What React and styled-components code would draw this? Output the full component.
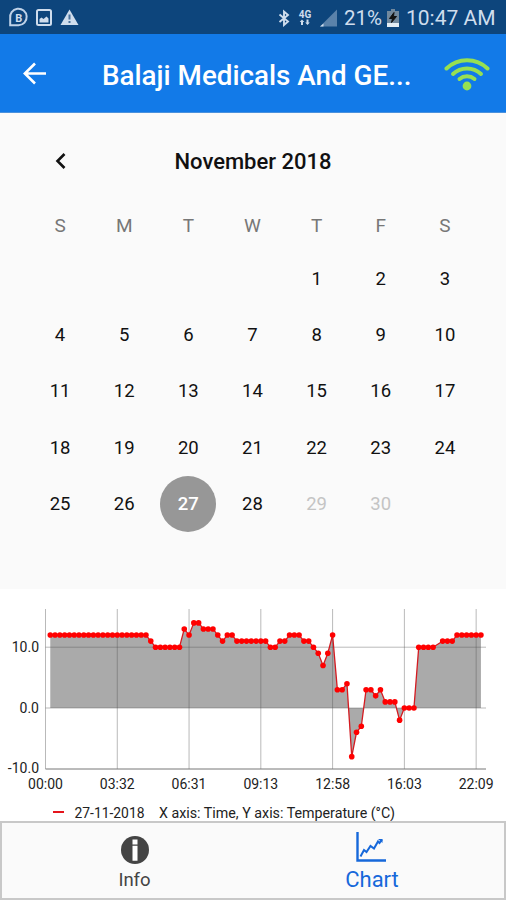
import React from 'react';
import styled, { createGlobalStyle } from 'styled-components';

const WEEKDAYS = ['S', 'M', 'T', 'W', 'T', 'F', 'S'];
const FIRST_WEEKDAY = 4;
const SELECTED_DAY = 27;
const LAST_ENABLED_DAY = 28;

// [temperature, number of samples in a row], null is a missed sample
const READINGS = [
  [12, 21], [11, 1], [10, 6], [13, 1], [12, 1], [14, 2], [13, 3], [12, 1],
  [11, 1], [12, 2], [11, 7], [10, 2], [11, 2], [12, 3], [11, 2], [10, 1],
  [9, 1], [7, 1], [9, 1], [12, 1], [3, 2], [4, 1], [-8, 1], [-4, 1], [-3, 1],
  [3, 2], [2, 1], [3, 1], [1, 3], [-2, 1], [0, 3], [10, 4], [null, 1],
  [11, 3], [12, 6],
]
  .flatMap(([value, count]) => Array(count).fill(value))
  .map((value, i) => ({ index: i + 1, value }))
  .filter(({ value }) => value !== null);

const TIMES = ['00:00', '03:32', '06:31', '09:13', '12:58', '16:03', '22:09'];

const LEFT = 45.5;
const RIGHT = 486;
const TOP = 20;
const ZERO = 119;
const BOTTOM = 180;
const STEP = 4.785;
const UNIT = 6.08;

const xAt = index => LEFT + index * STEP;
const yAt = value => ZERO - value * UNIT;

const StatusIcons = () => (
  <svg width="74" height="20" viewBox="0 0 74 20" fill="none">
    <path
      d="M2.2 18.300V11.500A8.300 8.300 0 1 1 10.500 18.300Z"
      stroke="#bfd2e8"
      strokeWidth="2"
    />
    <text x="10.700" y="15" fontSize="11" fontWeight="700" textAnchor="middle" fill="#cfdded">
      B
    </text>
    <rect x="29" y="3" width="14" height="15" rx="1.500" stroke="#cfdded" strokeWidth="2" />
    <path d="M31.500 15.500V12l2-1.500 2 1.500 3-2.500 2 2v4z" fill="#cfdded" />
    <path d="M61.500 2.500 70.500 18H52.500Z" fill="#cfdded" />
    <path d="M61.500 7.500v5M61.500 14v2" stroke="#48719b" strokeWidth="2" />
  </svg>
);

const BluetoothIcon = () => (
  <svg width="12" height="18" viewBox="0 0 12 18" fill="none" stroke="#cfdded" strokeWidth="1.900">
    <path d="M1.500 5.500 10 12.500 6 16V2.500L10 6 1.500 13" />
  </svg>
);

const NetworkIcon = () => (
  <svg width="16" height="20" viewBox="0 0 16 20" fill="#cfdded">
    <text x="8" y="10" fontSize="10" fontWeight="700" textAnchor="middle">
      4G
    </text>
    <path d="M5 11.500 7.300 14H6v3H4v-3H2.700zM10.500 17 8.200 14.500h1.300v-3h2v3h1.300z" />
  </svg>
);

const SignalIcon = () => (
  <svg width="17" height="18" viewBox="0 0 17 18">
    <path d="M17 0.500V17.500H0Z" fill="#5b82aa" />
    <path d="M3.500 14.500v3H0Z" fill="#cfdded" />
  </svg>
);

const BatteryIcon = () => (
  <svg width="12" height="18" viewBox="0 0 12 18">
    <path d="M4 0h4v2h4v16H0V2h4z" fill="#71889d" />
    <path d="M0 14h12v4H0z" fill="#e4edf5" />
    <path d="M7 3.500 2.500 9.500H5.500L4.500 13.500 9.500 7.500H6.500z" fill="#111" stroke="#111" />
  </svg>
);

const BackIcon = () => (
  <svg width="24" height="24" viewBox="0 0 24 24" fill="none" stroke="#fff" strokeWidth="2.600">
    <path d="M23 12.500H2M12 2.500 1.800 12.500 12 22.500" />
  </svg>
);

const WifiIcon = () => (
  <svg
    width="46"
    height="36"
    viewBox="0 0 46 36"
    fill="none"
    stroke="#97e052"
    strokeWidth="4"
    strokeLinecap="round"
  >
    <path d="M2.500 13.500A29.500 29.500 0 0 1 43.500 13.500" />
    <path d="M9 19A20.500 20.500 0 0 1 37 19" />
    <path d="M15.500 24A11.800 11.800 0 0 1 30.500 24" />
    <circle cx="23" cy="31" r="4.400" fill="#97e052" stroke="none" />
  </svg>
);

const InfoIcon = () => (
  <svg width="28" height="28" viewBox="0 0 28 28">
    <circle cx="14" cy="14" r="14" fill="#444" />
    <path d="M11.500 3.500h5v5h-5zM11.500 9.700h5v15h-5z" fill="#fff" />
  </svg>
);

const ChartIcon = () => (
  <svg width="30" height="30" viewBox="0 0 30 30" fill="none" stroke="#1668da" strokeWidth="2">
    <path d="M1.500 0V28.500H30" strokeWidth="2.400" />
    <path d="M4.500 24.500 8 18 10.500 20 14.500 14 18 16.500 22 9.500 23.500 11 26 7.500" />
    <path d="M22 7H26.500V11Z" fill="#1668da" stroke="none" />
  </svg>
);

const TemperatureChart = () => {
  const points = READINGS.map(({ index, value }) => `${xAt(index)},${yAt(value)}`);
  const lastIndex = READINGS[READINGS.length - 1].index;
  const area = [`${xAt(1)},${ZERO}`, ...points, `${xAt(lastIndex)},${ZERO}`];

  return (
    <ChartSvg viewBox="0 0 506 232">
      <polygon points={area.join(' ')} fill="#aaa" />
      {[10, 0].map(value => (
        <GridLine key={value} x1={LEFT} x2={RIGHT} y1={yAt(value)} y2={yAt(value)} />
      ))}
      {TIMES.map((time, i) => (
        <GridLine key={time} x1={xAt(i * 15)} x2={xAt(i * 15)} y1={TOP} y2={BOTTOM} />
      ))}
      <line x1={LEFT} x2={RIGHT} y1={BOTTOM} y2={BOTTOM} stroke="#777" />
      <polyline points={points.join(' ')} fill="none" stroke="#d51a20" strokeWidth="1.300" />
      {READINGS.map(({ index, value }) => (
        <circle key={index} cx={xAt(index)} cy={yAt(value)} r="2.800" fill="#f00" />
      ))}
      {[10, 0, -10].map(value => (
        <AxisText key={value} x="39" y={yAt(value) + 4.5} textAnchor="end">
          {value.toFixed(1)}
        </AxisText>
      ))}
      {TIMES.map((time, i) => (
        <AxisText key={time} x={xAt(i * 15)} y="199.500" textAnchor="middle">
          {time}
        </AxisText>
      ))}
      <rect x="53" y="222" width="11" height="2" fill="#e5141c" />
      <AxisText x="74.500" y="229" textLength="70" lengthAdjust="spacingAndGlyphs">
        27-11-2018
      </AxisText>
      <AxisText x="159" y="229" textLength="236" lengthAdjust="spacingAndGlyphs">
        X axis: Time, Y axis: Temperature (°C)
      </AxisText>
    </ChartSvg>
  );
};

const Calendar = () => (
  <CalendarPanel>
    <MonthBar>
      <svg width="12" height="18" viewBox="0 0 12 18" fill="none" stroke="#111" strokeWidth="2.600">
        <path d="M10.500 2 3.500 9l7 7" />
      </svg>
      <MonthTitle>November 2018</MonthTitle>
    </MonthBar>
    <Weekdays>
      {WEEKDAYS.map((day, i) => (
        <span key={i}>{day}</span>
      ))}
    </Weekdays>
    <Days>
      {Array.from({ length: 30 }, (_, i) => i + 1).map(day => (
        <Day
          key={day}
          $first={day === 1}
          $selected={day === SELECTED_DAY}
          $disabled={day > LAST_ENABLED_DAY}
        >
          {day}
        </Day>
      ))}
    </Days>
  </CalendarPanel>
);

const App = () => (
  <Screen>
    <GlobalStyle />
    <StatusBar>
      <StatusIcons />
      <StatusGroup>
        <BluetoothIcon />
        <NetworkIcon />
        <SignalIcon />
        <Battery>21%</Battery>
        <BatteryIcon />
        <Clock>10:47 AM</Clock>
      </StatusGroup>
    </StatusBar>
    <Header>
      <BackIcon />
      <Title>Balaji Medicals And GE...</Title>
      <WifiIcon />
    </Header>
    <Calendar />
    <ChartPanel>
      <TemperatureChart />
    </ChartPanel>
    <Tabs>
      <InfoTab>
        <InfoIcon />
        <span>Info</span>
      </InfoTab>
      <ChartTab>
        <ChartIcon />
        <span>Chart</span>
      </ChartTab>
    </Tabs>
  </Screen>
);

const GlobalStyle = createGlobalStyle`
  * {
    box-sizing: border-box;
  }

  body {
    margin: 0;
    font-family: Roboto, sans-serif;
  }

  svg {
    display: block;
    flex-shrink: 0;
  }
`;

const Screen = styled.div`
  width: 506px;
  height: 900px;
  display: flex;
  flex-direction: column;
  background: #fafafa;
  overflow: hidden;
`;

const StatusBar = styled.div`
  height: 34px;
  padding: 0 10px 0 8px;
  display: flex;
  align-items: center;
  justify-content: space-between;
  background: #0d457c;
  color: #cfdded;
`;

const StatusGroup = styled.div`
  display: flex;
  align-items: center;
  margin-right: 2px;
  white-space: nowrap;

  svg {
    margin-top: 1px;
  }

  svg + svg {
    margin-left: 7px;
  }
`;

const Battery = styled.span`
  width: 39px;
  margin: 2px 4px 0 7px;
  font-size: 20.5px;
`;

const Clock = styled.span`
  width: 88px;
  margin: 2px 0 0 7px;
  font-size: 21px;
`;

const Header = styled.header`
  height: 79px;
  padding: 0 16px 0 23px;
  display: flex;
  align-items: center;
  background: #127ae8;
  border-bottom: 1px solid #4a91dd;
`;

const Title = styled.h1`
  flex: 1;
  margin: 5px 0 0 55px;
  font-size: 27.8px;
  font-weight: 500;
  color: #fff;
  white-space: nowrap;
`;

const CalendarPanel = styled.section`
  height: 476px;
  padding: 20px 29px 0 28px;
`;

const MonthBar = styled.div`
  height: 56px;
  padding-left: 26px;
  display: flex;
  align-items: center;
`;

const MonthTitle = styled.h2`
  flex: 1;
  margin: 0 35px 0 -2px;
  font-size: 22px;
  font-weight: 500;
  text-align: center;
  color: #111;
`;

const Weekdays = styled.div`
  height: 62px;
  display: grid;
  grid-template-columns: repeat(7, 1fr);
  align-items: center;
  justify-items: center;
  padding-top: 10px;
  font-size: 19px;
  color: #777;
`;

const Days = styled.div`
  display: grid;
  grid-template-columns: repeat(7, 1fr);
  grid-auto-rows: 56.2px;
  justify-items: center;
`;

const Day = styled.div`
  grid-column-start: ${props => (props.$first ? FIRST_WEEKDAY + 1 : 'auto')};
  width: 56px;
  height: 56px;
  display: flex;
  align-items: center;
  justify-content: center;
  border-radius: 50%;
  font-size: 18.5px;
  font-weight: ${props => (props.$selected ? 500 : 400)};
  color: ${props => (props.$selected ? '#fff' : props.$disabled ? '#c4c4c4' : '#111')};
  background: ${props => (props.$selected ? '#979797' : 'transparent')};
`;

const ChartPanel = styled.section`
  height: 232px;
  background: #fff;
`;

const ChartSvg = styled.svg`
  width: 506px;
  height: 232px;
`;

const GridLine = styled.line`
  stroke: rgba(80, 80, 80, 0.4);
`;

const AxisText = styled.text`
  font-size: 14px;
  fill: #222;
`;

const Tabs = styled.nav`
  height: 79px;
  display: flex;
  border: 2px solid #c8c8c8;
  background: #fafafa;
`;

const Tab = styled.div`
  display: flex;
  flex-direction: column;
  align-items: center;
  white-space: nowrap;
`;

const InfoTab = styled(Tab)`
  width: 265px;
  padding-top: 13px;
  gap: 5px;
  font-size: 18.5px;
  color: #444;
`;

const ChartTab = styled(Tab)`
  width: 210px;
  padding-top: 9px;
  gap: 5px;
  font-size: 22px;
  color: #1668da;

  svg {
    margin-right: 2px;
  }
`;

export default App;
